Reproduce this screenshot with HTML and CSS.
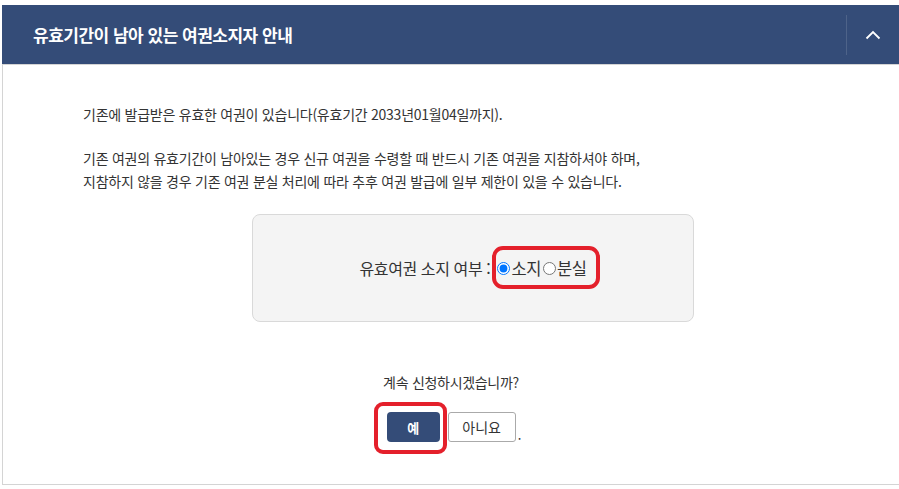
FILE: index.html
```html
<!DOCTYPE html>
<html lang="ko">
<head>
<meta charset="utf-8">
<title>유효기간이 남아 있는 여권소지자 안내</title>
<link rel="stylesheet" href="styles.css">
</head>
<body>
<div class="panel">
  <div class="header">
    <h2 class="title">유효기간이 남아 있는 여권소지자 안내</h2>
    <button class="toggle" aria-label="접기">
      <svg width="16" height="10" viewBox="0 0 16 10"><path d="M1.5 8.5 L8 2 L14.5 8.5" fill="none" stroke="#fff" stroke-width="1.8"/></svg>
    </button>
  </div>
  <div class="content">
    <p class="text">기존에 발급받은 유효한 여권이 있습니다(유효기간 2033년01월04일까지).</p>
    <p class="text">기존 여권의 유효기간이 남아있는 경우 신규 여권을 수령할 때 반드시 기존 여권을 지참하셔야 하며,<br>지참하지 않을 경우 기존 여권 분실 처리에 따라 추후 여권 발급에 일부 제한이 있을 수 있습니다.</p>
    <div class="box">
      <span class="label">유효여권 소지 여부 :</span>
      <span class="choices">
        <label class="opt"><input type="radio" name="own" checked>소지</label><label class="opt"><input type="radio" name="own">분실</label>
        <span class="mark mark-radio"></span>
      </span>
    </div>
    <p class="question">계속 신청하시겠습니까?</p>
    <div class="actions">
      <span class="yes-wrap"><button class="btn btn-yes">예</button><span class="mark mark-yes"></span></span><button class="btn btn-no">아니요</button><span class="dot">.</span>
    </div>
  </div>
</div>
</body>
</html>
```
FILE: styles.css
```css
* { box-sizing: border-box; }
body {
  margin: 0;
  background: #fff;
  font-family: "Noto Sans CJK KR", "Noto Sans", sans-serif;
  color: #333;
}
.panel {
  margin: 5px 0 0 2px;
  width: 897px;
}
.header {
  height: 59px;
  background: #344c78;
  display: flex;
  align-items: center;
  justify-content: space-between;
  padding-left: 31px;
}
.title {
  margin: 0;
  color: #fff;
  font-size: 17px;
  font-weight: 700;
  letter-spacing: -0.5px;
}
.toggle {
  width: 53px;
  height: 40px;
  border: 0;
  border-left: 1px solid #4e6389;
  background: transparent;
  display: flex;
  align-items: center;
  justify-content: center;
  padding: 0;
}
.content {
  border: 1px solid #d4d4d4;
  border-right: 0;
  height: 421px;
  padding: 38px 0 0 80px;
}
.text {
  margin: 0 0 21px;
  font-size: 14px;
  line-height: 23px;
  letter-spacing: -0.25px;
}
.box {
  margin: 6px 0 0 169px;
  width: 442px;
  height: 108px;
  background: #f4f4f4;
  border: 1px solid #d9d9d9;
  border-radius: 8px;
  display: flex;
  align-items: center;
  justify-content: center;
  font-size: 16px;
  letter-spacing: -0.4px;
}
.label { margin-right: 5px; white-space: nowrap; }
.choices {
  position: relative;
  display: inline-flex;
  align-items: center;
  font-size: 16.5px;
}
.opt {
  display: inline-flex;
  align-items: center;
}
.opt input {
  margin: 0 1px 0 2px;
  width: 13px;
  height: 13px;
}
.mark {
  position: absolute;
  border: 4px solid #e4202b;
  border-radius: 11px;
  pointer-events: none;
}
.mark-radio {
  left: -3px;
  right: -13px;
  top: -10px;
  bottom: -9px;
}
.question {
  margin: 49px 0 0 -80px;
  text-align: center;
  font-size: 14px;
  line-height: 23px;
  letter-spacing: -0.3px;
}
.actions {
  margin: 18px 0 0 -80px;
  display: flex;
  justify-content: center;
  align-items: flex-end;
  padding-left: 6px;
}
.yes-wrap { position: relative; display: inline-block; }
.btn {
  height: 30px;
  font-family: inherit;
  font-size: 13px;
  border-radius: 4px;
  padding: 0;
  display: block;
}
.btn-yes {
  width: 53px;
  background: #344c78;
  color: #fff;
  border: 0;
  font-weight: 700;
}
.btn-no {
  width: 68px;
  margin-left: 8px;
  background: #fff;
  color: #333;
  border: 1px solid #aaa;
  border-radius: 3px;
  font-size: 14px;
}
.mark-yes {
  left: -13px;
  right: -7px;
  top: -10px;
  bottom: -12px;
  border-radius: 9px;
}
.dot {
  font-size: 13px;
  line-height: 15px;
  margin-left: 2px;
}
```
